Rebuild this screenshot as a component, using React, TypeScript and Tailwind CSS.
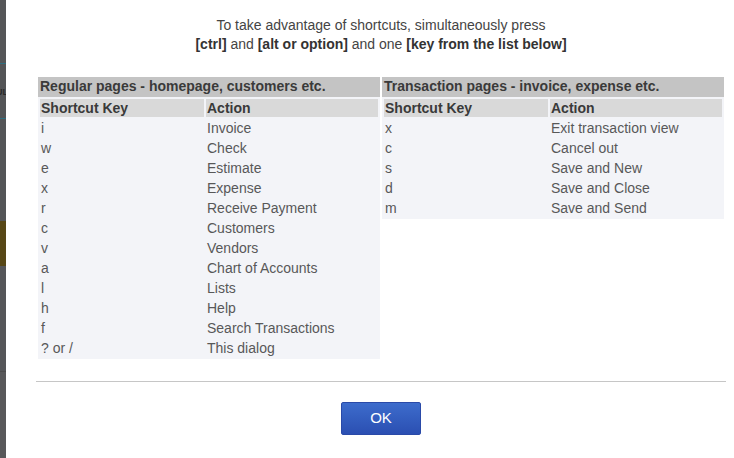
import React from "react";

const regular: [string, string][] = [
  ["i", "Invoice"],
  ["w", "Check"],
  ["e", "Estimate"],
  ["x", "Expense"],
  ["r", "Receive Payment"],
  ["c", "Customers"],
  ["v", "Vendors"],
  ["a", "Chart of Accounts"],
  ["l", "Lists"],
  ["h", "Help"],
  ["f", "Search Transactions"],
  ["? or /", "This dialog"],
];

const transaction: [string, string][] = [
  ["x", "Exit transaction view"],
  ["c", "Cancel out"],
  ["s", "Save and New"],
  ["d", "Save and Close"],
  ["m", "Save and Send"],
];

function ShortcutTable({ title, rows }: { title: string; rows: [string, string][] }) {
  return (
    <div className="w-[342px] flex flex-col">
      <div className="h-[20px] bg-[#c4c4c4] pl-[2px] text-[14px] leading-[19px] font-bold text-[#3a3a3a]">
        {title}
      </div>
      <div className="bg-[#f3f4f8] p-[2px] grid grid-cols-[164px_172px] gap-[2px]">
        <div className="h-[18px] bg-[#d9d9d9] pl-[1px] text-[14px] leading-[19px] font-bold text-[#3a3a3a]">
          Shortcut Key
        </div>
        <div className="h-[18px] bg-[#d9d9d9] pl-[1px] text-[14px] leading-[19px] font-bold text-[#3a3a3a]">
          Action
        </div>
        {rows.map(([k, a], i) => (
          <React.Fragment key={i}>
            <div className="h-[18px] pl-[1px] text-[14px] leading-[19px] text-[#585858]">{k}</div>
            <div className="h-[18px] pl-[1px] text-[14px] leading-[19px] text-[#585858]">{a}</div>
          </React.Fragment>
        ))}
      </div>
    </div>
  );
}

export default function App() {
  return (
    <div
      className="h-[458px] w-[734px] overflow-hidden flex bg-white"
      style={{ fontFamily: '"Liberation Sans", Arial, sans-serif' }}
    >
      <div className="w-[6px] shrink-0 flex flex-col bg-[#545557] overflow-hidden">
        <div className="h-[63px] bg-[#555658]" />
        <div className="h-[1px] bg-[#2f6f80]" />
        <div className="h-[54px] relative">
          <span className="absolute left-[-4px] top-[22px] text-[9px] font-bold text-[#2a2a2a]">UL</span>
        </div>
        <div className="h-[1px] bg-[#2f6f80]" />
        <div className="h-[102px]" />
        <div className="h-[45px] bg-[#574716]" />
        <div className="h-[105px] bg-[#555659]" />
        <div className="h-[1px] bg-[#4c4c4c]" />
        <div className="flex-1 bg-[#58585a]" />
      </div>
      <div className="flex-1 flex flex-col pl-[30px] pr-[8px]">
        <div className="pt-[16px] text-center text-[14px] leading-[19px] text-[#444444]">
          <div>To take advantage of shortcuts, simultaneously press</div>
          <div>
            <b className="text-[#333333]">[ctrl]</b> and <b className="text-[#333333]">[alt or option]</b> and one{" "}
            <b className="text-[#333333]">[key from the list below]</b>
          </div>
        </div>
        <div className="mt-[23px] px-[2px] flex items-start gap-[2px]">
          <ShortcutTable title="Regular pages - homepage, customers etc." rows={regular} />
          <ShortcutTable title="Transaction pages - invoice, expense etc." rows={transaction} />
        </div>
        <div className="mt-[22px] h-[1px] bg-[#c6c6c6]" />
        <div className="mt-[20px] flex justify-center">
          <button className="w-[80px] h-[33px] rounded-[2px] bg-gradient-to-b from-[#3d6ccc] to-[#2b4fb2] text-white text-[15px] border border-[#2a4aa8]">
            OK
          </button>
        </div>
      </div>
    </div>
  );
}
